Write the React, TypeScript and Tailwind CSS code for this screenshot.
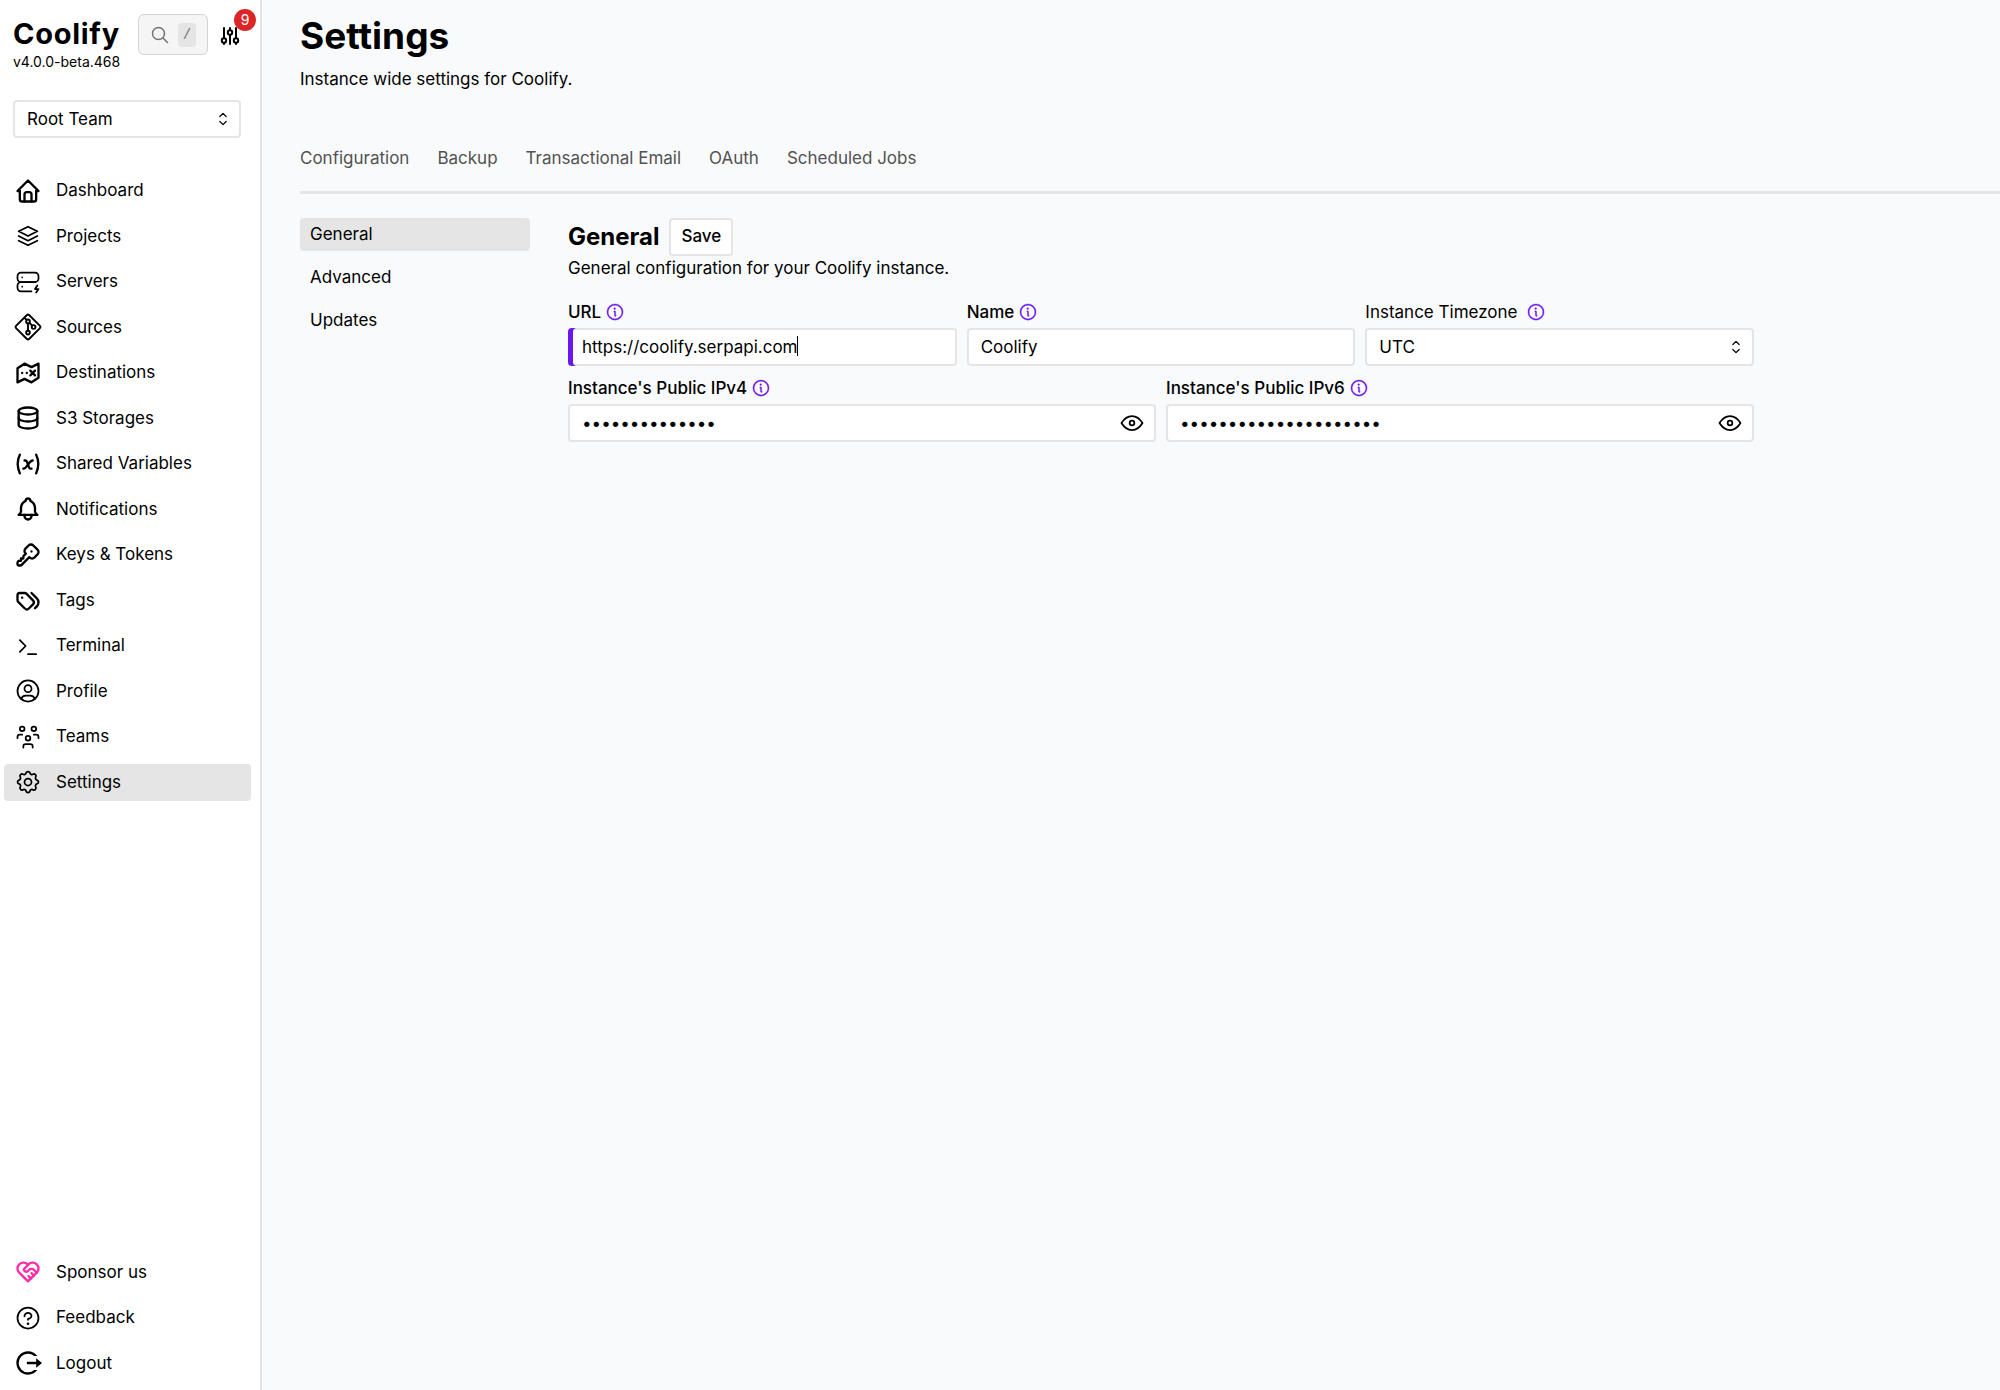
import { useState } from "react";
import type { ReactNode } from "react";
import {
  TbBell,
  TbDatabase,
  TbEye,
  TbHeartHandshake,
  TbHome,
  TbKey,
  TbServerBolt,
  TbSettings,
  TbStack2,
  TbTags,
  TbTerminal,
  TbUserCircle,
  TbUsersGroup,
  TbVariable,
} from "react-icons/tb";
import { PiInfo, PiQuestion } from "react-icons/pi";

function GitIcon() {
  return (
    <svg viewBox="0 0 15 15" fill="none" stroke="currentColor" className="w-7 h-7">
      <path d="M6.793 1.207 1.207 6.793a1 1 0 0 0 0 1.414l5.586 5.586a1 1 0 0 0 1.414 0l5.586-5.586a1 1 0 0 0 0-1.414L8.207 1.207a1 1 0 0 0-1.414 0Z" />
      <circle cx="7.5" cy="4.5" r="1" />
      <circle cx="10.5" cy="7.5" r="1" />
      <circle cx="7.5" cy="10.5" r="1" />
      <path d="m5.5 2.5 1 1M8.5 5.5l1.5 1.5M7.5 5.5v4" />
    </svg>
  );
}

function MapIcon() {
  return (
    <svg
      viewBox="0 0 24 24"
      fill="none"
      stroke="currentColor"
      strokeWidth="2"
      strokeLinecap="round"
      strokeLinejoin="round"
      className="w-7 h-7"
    >
      <path d="M9 4 3 8v12l6-3 6 3 6-4V4l-6 3-6-3zm-2 8.001V12m4 .001V12m3-2 2 2m2 2-2-2m0 0 2-2m-2 2-2 2" />
    </svg>
  );
}

function LogoutIcon() {
  return (
    <svg viewBox="0 0 24 24" fill="currentColor" className="w-7 h-7">
      <path d="M12 22C6.477 22 2 17.523 2 12S6.477 2 12 2a9.99 9.99 0 0 1 8 4h-2.71a8 8 0 1 0 .001 12h2.71A9.99 9.99 0 0 1 12 22m7-6v-3h-8v-2h8V8l5 4z" />
    </svg>
  );
}

function SlidersIcon() {
  return (
    <svg
      viewBox="0 0 24 24"
      fill="none"
      stroke="currentColor"
      strokeWidth="2"
      strokeLinecap="round"
      className="w-6 h-6"
    >
      <path d="M6 4v10M6 19v1M12 4v2M12 11v9M18 4v10M18 19v1" />
      <circle cx="6" cy="16.5" r="2.2" />
      <circle cx="12" cy="8.5" r="2.2" />
      <circle cx="18" cy="16.5" r="2.2" />
    </svg>
  );
}

function ChevronUpDown() {
  return (
    <svg
      viewBox="0 0 24 24"
      fill="none"
      stroke="currentColor"
      strokeWidth="1.5"
      strokeLinecap="round"
      strokeLinejoin="round"
      className="pointer-events-none absolute right-2 top-1/2 -translate-y-1/2 w-5 h-5"
    >
      <path d="M8.25 15 12 18.75 15.75 15m-7.5-6L12 5.25 15.75 9" />
    </svg>
  );
}

const mainMenu = [
  { label: "Dashboard", icon: <TbHome className="w-7 h-7" /> },
  { label: "Projects", icon: <TbStack2 className="w-7 h-7 stroke-[1.5]" /> },
  { label: "Servers", icon: <TbServerBolt className="w-7 h-7 stroke-[1.5]" /> },
  { label: "Sources", icon: <GitIcon /> },
  { label: "Destinations", icon: <MapIcon /> },
  { label: "S3 Storages", icon: <TbDatabase className="w-7 h-7" /> },
  { label: "Shared Variables", icon: <TbVariable className="w-7 h-7" /> },
  { label: "Notifications", icon: <TbBell className="w-7 h-7" /> },
  { label: "Keys & Tokens", icon: <TbKey className="w-7 h-7" /> },
  { label: "Tags", icon: <TbTags className="w-7 h-7" /> },
  { label: "Terminal", icon: <TbTerminal className="w-7 h-7 stroke-[1.5]" /> },
  { label: "Profile", icon: <TbUserCircle className="w-7 h-7 stroke-[1.5]" /> },
  { label: "Teams", icon: <TbUsersGroup className="w-7 h-7 stroke-[1.5]" /> },
  { label: "Settings", icon: <TbSettings className="w-7 h-7 stroke-[1.5]" />, active: true },
];

const footerMenu = [
  { label: "Sponsor us", icon: <TbHeartHandshake className="w-7 h-7 text-[#ff2ea6]" /> },
  { label: "Feedback", icon: <PiQuestion className="w-7 h-7" /> },
  { label: "Logout", icon: <LogoutIcon /> },
];

const tabs = ["Configuration", "Backup", "Transactional Email", "OAuth", "Scheduled Jobs"];
const sections = ["General", "Advanced", "Updates"];

function MenuItem({ label, icon, active }: { label: string; icon: ReactNode; active?: boolean }) {
  return (
    <li>
      <a
        href="#"
        className={`flex items-center gap-3.5 rounded px-2.5 py-1.5 leading-normal ${active ? "bg-neutral-200" : ""}`}
      >
        <span className="flex w-7 h-6 shrink-0 items-center justify-center">{icon}</span>
        {label}
      </a>
    </li>
  );
}

function Field({
  id,
  label,
  light,
  children,
}: {
  id: string;
  label: string;
  light?: boolean;
  children: ReactNode;
}) {
  return (
    <div className="flex flex-1 flex-col gap-1">
      <div className={`flex items-center leading-6 ${light ? "gap-2" : "gap-1 font-medium"}`}>
        <label htmlFor={id}>{label}</label>
        <PiInfo className="w-5 h-5 stroke-[4] text-[#6b16ed]" />
      </div>
      <div className="relative">{children}</div>
    </div>
  );
}

const inputClass =
  "block w-full h-[38px] rounded border-2 border-neutral-200 bg-white px-3 text-black outline-none";

function SecretInput({ id, length }: { id: string; length: number }) {
  const [visible, setVisible] = useState(false);

  return (
    <>
      <input
        id={id}
        type={visible ? "text" : "password"}
        defaultValue={"0".repeat(length)}
        className={`${inputClass} pr-12`}
      />
      <button
        type="button"
        aria-label="Toggle visibility"
        onClick={() => setVisible(!visible)}
        className="absolute inset-y-0 right-0 flex items-center px-2.5"
      >
        <TbEye className="w-7 h-7 stroke-[1.5]" />
      </button>
    </>
  );
}

function Sidebar() {
  return (
    <aside className="flex w-[262px] shrink-0 flex-col border-r-2 border-neutral-200 bg-white pb-2">
      <div className="flex items-start pl-[13px] pr-[18px] pt-3.5">
        <div className="flex-1">
          <a href="#" className="block text-[29px] leading-10 font-bold tracking-wide">
            Coolify
          </a>
          <p className="text-sm leading-4">v4.0.0-beta.468</p>
        </div>
        <button
          type="button"
          aria-label="Search"
          className="flex h-[41px] items-center gap-2 rounded-md border border-neutral-300 bg-neutral-100 px-[11px] text-neutral-500"
        >
          <svg viewBox="0 0 20 20" fill="none" stroke="currentColor" strokeWidth="1.5" strokeLinecap="round" className="w-5 h-5">
            <path d="m17.5 17.5-4.7-4.7M14.5 8.5a6 6 0 1 1-12 0 6 6 0 0 1 12 0Z" />
          </svg>
          <kbd className="w-[18px] rounded bg-neutral-200 text-center text-sm leading-6">/</kbd>
        </button>
        <button type="button" aria-label="What's new" className="relative ml-2.5 mt-2.5">
          <SlidersIcon />
          <span className="absolute -top-[15px] -right-3.5 flex w-[22px] h-[22px] items-center justify-center rounded-full bg-[#dc2626] text-sm text-white">
            9
          </span>
        </button>
      </div>

      <div className="relative mt-[30px] ml-[13px] mr-[19px]">
        <select aria-label="Team" className={`${inputClass} appearance-none pt-0.5`} defaultValue="root">
          <option value="root">Root Team</option>
        </select>
        <ChevronUpDown />
      </div>

      <nav className="flex flex-1 flex-col justify-between gap-8 pt-[34px] pl-1 pr-[9px]">
        <ul className="flex flex-col gap-2">
          {mainMenu.map((item) => (
            <MenuItem key={item.label} {...item} />
          ))}
        </ul>
        <ul className="flex flex-col gap-2">
          {footerMenu.map((item) => (
            <MenuItem key={item.label} {...item} />
          ))}
        </ul>
      </nav>
    </aside>
  );
}

function GeneralForm() {
  return (
    <form className="flex w-full max-w-[1186px] flex-col" onSubmit={(e) => e.preventDefault()}>
      <div className="flex items-center gap-2.5">
        <h2 className="text-2xl font-bold">General</h2>
        <button
          type="submit"
          className="h-[38px] rounded border-2 border-neutral-200 bg-white px-2.5 font-medium"
        >
          Save
        </button>
      </div>
      <p className="leading-6">General configuration for your Coolify instance.</p>

      <div className="mt-5 flex gap-2.5">
        <Field id="url" label="URL">
          <input
            id="url"
            type="text"
            defaultValue="https://coolify.serpapi.com"
            className="block w-full h-[38px] rounded bg-white px-3.5 caret-transparent outline-none shadow-[inset_5px_0_0_#6b16ed,inset_0_0_0_2px_#e5e5e5]"
          />
          <span className="absolute left-[229px] top-2 w-px h-5 bg-black" />
        </Field>
        <Field id="name" label="Name">
          <input id="name" type="text" defaultValue="Coolify" className={inputClass} />
        </Field>
        <Field id="timezone" label="Instance Timezone" light>
          <select id="timezone" className={`${inputClass} appearance-none pt-0.5`} defaultValue="UTC">
            <option value="UTC">UTC</option>
          </select>
          <ChevronUpDown />
        </Field>
      </div>

      <div className="mt-2.5 flex gap-2.5">
        <Field id="ipv4" label="Instance's Public IPv4">
          <SecretInput id="ipv4" length={14} />
        </Field>
        <Field id="ipv6" label="Instance's Public IPv6">
          <SecretInput id="ipv6" length={21} />
        </Field>
      </div>
    </form>
  );
}

export default function App() {
  return (
    <div className="flex min-h-screen bg-gray-50 font-['Inter',sans-serif] text-[17px] text-black antialiased">
      <Sidebar />
      <main className="min-w-0 flex-1 pl-[38px] pt-4">
        <h1 className="text-[37px] leading-10 font-bold">Settings</h1>
        <p className="mt-[11px] leading-6">Instance wide settings for Coolify.</p>

        <nav className="mt-[43px] flex gap-7 border-b-3 border-neutral-200 pt-3 pb-[21px] text-neutral-600">
          {tabs.map((tab) => (
            <a key={tab} href="#" className="leading-6">
              {tab}
            </a>
          ))}
        </nav>

        <div className="flex gap-[38px] pt-6">
          <nav className="flex w-[230px] shrink-0 flex-col gap-2.5">
            {sections.map((section, i) => (
              <a
                key={section}
                href="#"
                className={`rounded px-2.5 py-1 leading-[25px] ${i === 0 ? "bg-neutral-200" : ""}`}
              >
                {section}
              </a>
            ))}
          </nav>
          <GeneralForm />
        </div>
      </main>
    </div>
  );
}
